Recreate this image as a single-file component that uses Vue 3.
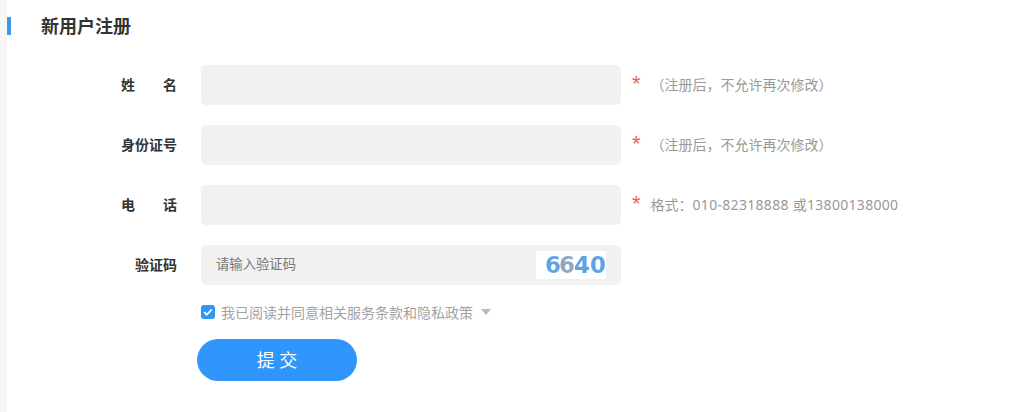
<script setup>
const rows = [
  { label: "姓名", hint: "（注册后，不允许再次修改）", num: "" },
  { label: "身份证号", hint: "（注册后，不允许再次修改）", num: "" },
  { label: "电话", hint: "格式：", num: "010-82318888 或13800138000" },
];
</script>

<template>
  <div class="page">
    <div class="strip"></div>
    <div class="main">
      <h2 class="title">新用户注册</h2>
      <form class="form" @submit.prevent>
        <div v-for="row in rows" :key="row.label" class="row">
          <label class="label spread">
            <span v-for="ch in row.label" :key="ch">{{ ch }}</span>
          </label>
          <input class="field" type="text">
          <span class="star">*</span>
          <span class="hint">{{ row.hint }}<span class="num">{{ row.num }}</span></span>
        </div>
        <div class="row">
          <label class="label">验证码</label>
          <div class="field code">
            <input class="code_input" type="text" placeholder="请输入验证码">
            <div class="captcha">
              <div class="digits"><span>6</span><span class="smudge">6</span><span class="over">4</span><span>0</span></div>
            </div>
          </div>
        </div>
        <div class="agree">
          <svg class="check" width="14" height="14" viewBox="0 0 14 14">
            <rect width="14" height="14" rx="3" fill="#3096f5" />
            <path d="M3.2 7.2l2.6 2.5 5-5.2" fill="none" stroke="#fff" stroke-width="1.8" />
          </svg>
          <span class="agree_text">我已阅读并同意相关服务条款和隐私政策</span>
          <span class="arrow"></span>
        </div>
        <button class="submit"><span>提 交</span></button>
      </form>
    </div>
  </div>
</template>

<style>
html, body {
  margin: 0;
  background: #fff;
}
</style>

<style scoped>
.page {
  display: flex;
  height: 412px;
  overflow: hidden;
  font-family: "Noto Sans", "Noto Sans CJK SC", sans-serif;
}

.strip {
  width: 7px;
  background: #f7f7f7;
}

.main {
  flex: 1;
}

.title {
  margin: 17px 0 0;
  height: 18px;
  padding-left: 30px;
  border-left: 4px solid #3d97ea;
  font-size: 18px;
  line-height: 18px;
  font-weight: bold;
  color: #333;
}

.form {
  margin-top: 30px;
  padding-left: 114px;
}

.row {
  display: flex;
  align-items: center;
  height: 40px;
  margin-bottom: 20px;
}

.label {
  width: 56px;
  margin-right: 24px;
  margin-bottom: 2px;
  font-size: 14px;
  font-weight: bold;
  color: #333;
  text-align: right;
}

.spread {
  display: flex;
  justify-content: space-between;
}

.field {
  box-sizing: border-box;
  width: 420px;
  height: 40px;
  border: none;
  border-radius: 5px;
  background: #f1f1f1;
  outline: none;
}

.star {
  align-self: flex-start;
  margin-top: 8px;
  margin-left: 11px;
  height: 22px;
  font-family: "Liberation Sans", sans-serif;
  font-size: 22px;
  line-height: 22px;
  color: #e8615a;
}

.hint {
  margin-left: 10px;
  margin-bottom: 2px;
  font-size: 14px;
  color: #999;
}

.num {
  letter-spacing: 0.3px;
}

.code {
  display: flex;
  align-items: center;
  justify-content: space-between;
  padding: 0 15px;
}

.code_input {
  flex: 1;
  border: none;
  background: none;
  outline: none;
  padding: 0;
  margin-bottom: 2px;
  font-family: inherit;
  font-size: 13.33px;
}

.code_input::placeholder {
  color: #777;
}

.captcha {
  display: flex;
  align-items: center;
  justify-content: flex-end;
  width: 70px;
  height: 28px;
  background: #fff;
}

.digits {
  display: flex;
  font-family: "DejaVu Sans", sans-serif;
  font-size: 23px;
  font-weight: bold;
  color: #5fa3e4;
  filter: blur(0.6px);
}

.smudge {
  margin-left: -2px;
  color: #8fa9c4;
}

.over {
  margin-left: -1px;
}

.agree {
  display: flex;
  align-items: center;
  height: 14px;
  margin-left: 80px;
}

.agree_text {
  margin-left: 6px;
  font-size: 14px;
  color: #a3a3a3;
}

.arrow {
  margin-left: 8px;
  border-left: 5px solid transparent;
  border-right: 5px solid transparent;
  border-top: 6px solid #bbb;
}

.submit {
  display: block;
  width: 160px;
  height: 42px;
  margin: 20px 0 0 76px;
  padding: 0 0 2px;
  border: none;
  border-radius: 21px;
  background: #3096fb;
  color: #fff;
  font-family: inherit;
  font-size: 18px;
}
</style>
